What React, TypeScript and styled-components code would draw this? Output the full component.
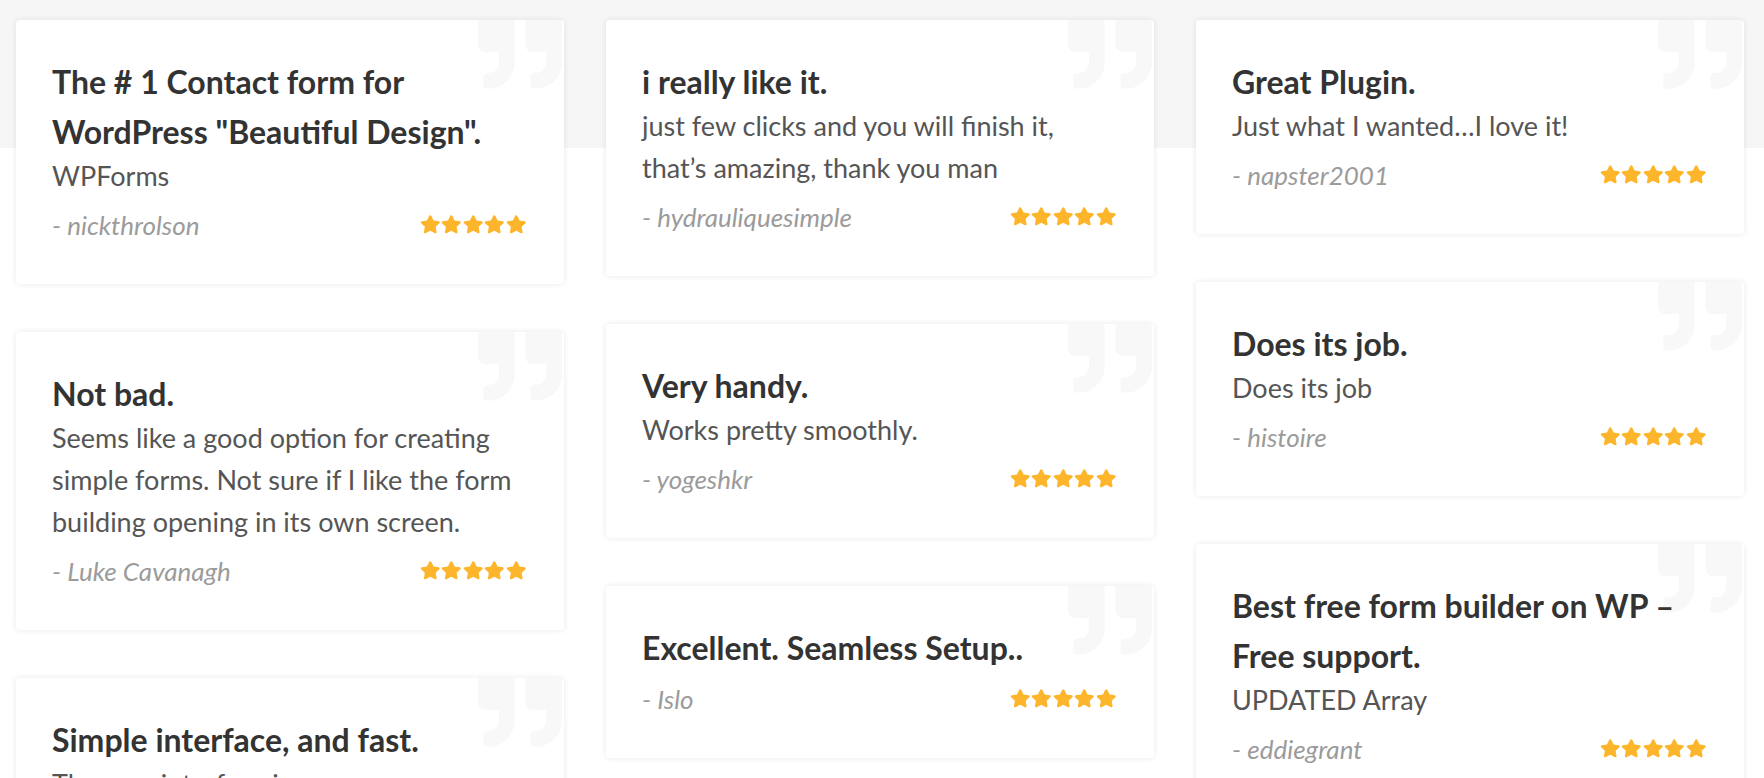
import React from "react";
import styled, { createGlobalStyle } from "styled-components";
import { FaStar, FaQuoteRight } from "react-icons/fa";

const GlobalStyle = createGlobalStyle`
  html, body {
    margin: 0;
    padding: 0;
    background: #ffffff;
  }
  body {
    font-family: Lato, "Open Sans", "Liberation Sans", sans-serif;
    -webkit-font-smoothing: antialiased;
  }
`;

const Page = styled.div`
  width: 1764px;
  height: 778px;
  overflow: hidden;
  box-sizing: border-box;
  padding: 20px 0 0 16px;
  display: flex;
  align-items: flex-start;
  gap: 42px;
  background: linear-gradient(#f6f6f6 0, #f6f6f6 148px, #ffffff 148px);
`;

const Column = styled.div`
  width: 548px;
  flex: 0 0 548px;
  display: flex;
  flex-direction: column;
  gap: 48px;
`;

const Card = styled.article`
  position: relative;
  overflow: hidden;
  background: #ffffff;
  border-radius: 4px;
  box-shadow: 0 0 6px rgba(0, 0, 0, 0.09);
  padding: 37px 38px 39px 36px;
`;

const QuoteMark = styled.div`
  position: absolute;
  top: -10px;
  right: 2px;
  color: #f8f8f8;
  line-height: 0;
  z-index: 0;
`;

const Content = styled.div`
  position: relative;
  z-index: 1;
`;

const Title = styled.h3`
  margin: 0 0 -2px;
  font-family: Lato, "Open Sans", sans-serif;
  font-weight: 700;
  font-size: 32px;
  line-height: 50px;
  color: #333333;
`;

const Body = styled.p`
  margin: 0;
  font-family: Lato, "Open Sans", sans-serif;
  font-weight: 400;
  font-size: 27px;
  line-height: 42px;
  color: #555555;
`;

const Footer = styled.div`
  margin-top: 8px;
  height: 40px;
  display: flex;
  align-items: center;
  justify-content: space-between;
`;

const Author = styled.span`
  font-family: Lato, "Open Sans", sans-serif;
  font-style: italic;
  font-weight: 400;
  font-size: 26px;
  line-height: 40px;
  color: #9b9b9b;
`;

const Stars = styled.div`
  display: flex;
  gap: 1px;
  color: #fdb62c;
  line-height: 0;
  margin-top: -2px;
`;

type Review = {
  title: string;
  body?: string;
  author: string;
};

const columns: Review[][] = [
  [
    {
      title: 'The # 1 Contact form for WordPress "Beautiful Design".',
      body: "WPForms",
      author: "nickthrolson",
    },
    {
      title: "Not bad.",
      body:
        "Seems like a good option for creating simple forms. Not sure if I like the form building opening in its own screen.",
      author: "Luke Cavanagh",
    },
    {
      title: "Simple interface, and fast.",
      body: "The new interface is way more easy than the old one, and it loads fast.",
      author: "wpuser",
    },
  ],
  [
    {
      title: "i really like it.",
      body: "just few clicks and you will finish it, that’s amazing, thank you man",
      author: "hydrauliquesimple",
    },
    {
      title: "Very handy.",
      body: "Works pretty smoothly.",
      author: "yogeshkr",
    },
    {
      title: "Excellent. Seamless Setup..",
      author: "Islo",
    },
  ],
  [
    {
      title: "Great Plugin.",
      body: "Just what I wanted…I love it!",
      author: "napster2001",
    },
    {
      title: "Does its job.",
      body: "Does its job",
      author: "histoire",
    },
    {
      title: "Best free form builder on WP – Free support.",
      body: "UPDATED Array",
      author: "eddiegrant",
    },
  ],
];

function ReviewCard({ review }: { review: Review }) {
  return (
    <Card>
      <QuoteMark aria-hidden>
        <FaQuoteRight size={84} />
      </QuoteMark>
      <Content>
        <Title>{review.title}</Title>
        {review.body && <Body>{review.body}</Body>}
        <Footer>
          <Author>- {review.author}</Author>
          <Stars>
            {[0, 1, 2, 3, 4].map((i) => (
              <FaStar key={i} size={20.5} />
            ))}
          </Stars>
        </Footer>
      </Content>
    </Card>
  );
}

export default function App() {
  return (
    <>
      <GlobalStyle />
      <Page>
        {columns.map((col, ci) => (
          <Column key={ci}>
            {col.map((r, ri) => (
              <ReviewCard key={ri} review={r} />
            ))}
          </Column>
        ))}
      </Page>
    </>
  );
}
